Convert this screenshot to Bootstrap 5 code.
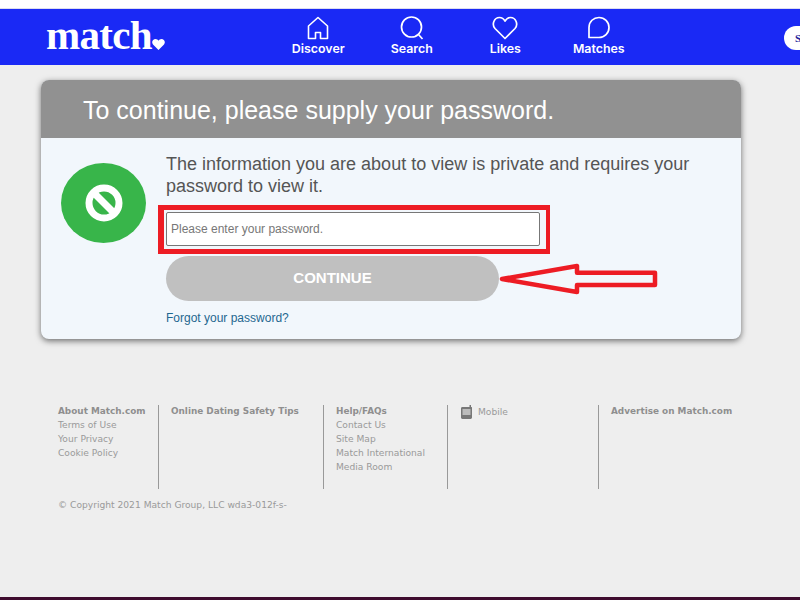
<!DOCTYPE html>
<html lang="en">
<head>
  <meta charset="UTF-8" />
  <meta name="viewport" content="width=device-width, initial-scale=1.0" />
  <title>Match - Password</title>
  <link href="https://cdn.jsdelivr.net/npm/bootstrap@5.3.3/dist/css/bootstrap.min.css" rel="stylesheet" />
  <style>
    html, body { height: 600px; overflow: hidden; }
    body { font-family: "Liberation Sans", Arial, sans-serif; padding-top: 9px; position: relative; background: #eee linear-gradient(#fff 8px, #dcdcf0 8px, #dcdcf0 9px, #eee 9px); }
    .top-bar { background: #1a29f5; height: 56px; overflow: hidden; position: relative; }
    .brand-logo { margin-left: 46px; width: 210px; color: #fff; font: 700 41px/1 "Liberation Serif", serif; letter-spacing: -.7px; padding-top: 6px; white-space: nowrap; }
    .brand-logo svg { vertical-align: -1px; }
    .top-links { margin-left: 15.500px; }
    .top-link { width: 93.5px; color: #fff; font: 600 12.4px/14px Inter, sans-serif; text-align: center; text-decoration: none; padding-top: 7px; display: block; }
    .top-link svg { display: block; margin: 0 auto 2px; }
    .user-pill { position: absolute; left: 784px; top: 17px; width: 40px; height: 24px; background: #fff; border-radius: 12px; color: #23239a; font: 700 11px/24px "Liberation Serif", serif; padding-left: 11px; }
    .pw-panel { width: 700px; height: 259px; margin: 15px 0 0 41px; border-radius: 8px; overflow: hidden; background: #f2f7fc; box-shadow: 0 2px 6px rgba(0,0,0,.55); }
    .pw-head { background: #919191; height: 58px; color: #fff; font-size: 25px; line-height: 60px; padding-left: 42px; }
    .pw-body { padding: 15px 0 0 20px; }
    .pw-icon { width: 85px; height: 80px; margin-top: 10px; border-radius: 50%; background: #38b54a; flex: none; }
    .pw-form { margin-left: 20px; width: 540px; }
    .pw-text { color: #555; font-size: 18px; line-height: 22px; margin: 0 0 15px; }
    .pw-input { width: 374px; height: 34px; border: 1px solid #777; border-radius: 2px; background: #fff; font-size: 12px; color: #666; padding: 0 4px; display: block; }
    .pw-input::placeholder { color: #777; opacity: 1; }
    .pw-btn { width: 333px; height: 45px; margin-top: 10px; display: block; border: 0; border-radius: 23px; background: #c0c0c0; color: #fff; font-size: 15px; font-weight: 700; padding: 0; }
    .forgot { display: inline-block; margin-top: 10px; color: #1f6790; font-size: 12px; line-height: 14px; text-decoration: none; }
    .red-box { position: absolute; left: 158px; top: 205px; width: 392px; height: 49px; border-style: solid; border-color: #ed1c24; border-width: 5px 4px 5px 6px; }
    .red-arrow { position: absolute; left: 495px; top: 260px; }
    .foot-wrap { margin: 66px 0 0 58px; font: 9.15px/14px "DejaVu Sans", Verdana, sans-serif; }
    .foot-col { height: 84px; border-right: 1px solid #999; flex: none; margin-bottom: 9px; }
    .foot-col:last-child { border-right: 0; }
    .foot-col a { display: block; color: #9a9a9a; text-decoration: none; white-space: nowrap; position: relative; top: -1px; }
    .foot-col a.foot-title { color: #8f8f8f; font-weight: 700; font-size: 8.9px; }
    .fc-1 { width: 101px; }
    .fc-2 { width: 165px; padding-left: 12px; }
    .fc-3 { width: 124px; padding-left: 12px; }
    .fc-4 { width: 151px; padding-left: 13px; }
    .fc-5 { width: 180px; padding-left: 12px; }
    .mobile-link { gap: 6px; padding-top: 1px; }
    .foot-copy { color: #9a9a9a; }
    .bottom-strip { position: absolute; left: 0; right: 0; top: 597px; height: 3px; background: #3f0c2e; }
  </style>
</head>
<body>

  <!-- Header -->
  <div class="top-bar d-flex">
    <div class="brand-logo">match<svg width="13" height="11" viewBox="0 0 13 11"><path d="M6.500 11 1 5.500C-1 3 1 0 3.500 0c1.300 0 2.400.8 3 1.800C7.100.8 8.200 0 9.500 0 12 0 14 3 12 5.500z" fill="#fff"/></svg></div>
    <div class="top-links d-flex">
      <a class="top-link" href="#">
        <svg width="22" height="24" viewBox="0 0 22 24" fill="none" stroke="#fff" stroke-width="1.600"><path d="M1.500 22.500V10L11 1.500 20.500 10v12.500h-7v-6h-5v6z" stroke-linejoin="round"/></svg>
        Discover</a>
      <a class="top-link" href="#">
        <svg width="26" height="24" viewBox="0 0 26 24" fill="none" stroke="#fff" stroke-width="1.700"><circle cx="12.500" cy="11" r="10"/><path d="m19.500 18.500 4 4.500"/></svg>
        Search</a>
      <a class="top-link" href="#">
        <svg width="26" height="24" viewBox="0 0 26 24" fill="none" stroke="#fff" stroke-width="1.700"><path d="M13 22.500 3 12.500C-.5 8.500 2 1.500 7.500 1.500c2.500 0 4.300 1.500 5.500 3.700 1.200-2.200 3-3.700 5.500-3.700 5.500 0 8 7 4.500 11z" stroke-linejoin="round"/></svg>
        Likes</a>
      <a class="top-link" href="#">
        <svg width="24" height="24" viewBox="0 0 24 24" fill="none" stroke="#fff" stroke-width="1.700"><path d="M2 21.500V11.500C2 5.500 6.500 1.500 12 1.500s10 4.300 10 10-4.500 10-10 10z" stroke-linejoin="round"/></svg>
        Matches</a>
    </div>
    <div class="user-pill">S</div>
  </div>

  <!-- Password panel -->
  <div class="pw-panel">
    <div class="pw-head">To continue, please supply your password.</div>
    <div class="pw-body d-flex">
      <div class="pw-icon d-flex align-items-center justify-content-center">
        <svg width="38" height="38" viewBox="0 0 38 38" fill="none" stroke="#fff" stroke-width="7"><ellipse cx="19" cy="19" rx="15" ry="15"/><path d="m9 9 20 20"/></svg>
      </div>
      <form class="pw-form">
        <p class="pw-text">The information you are about to view is private and requires your password to view it.</p>
        <input class="pw-input" type="text" placeholder="Please enter your password." />
        <button class="pw-btn" type="button">CONTINUE</button>
        <a class="forgot" href="#">Forgot your password?</a>
      </form>
    </div>
  </div>

  <!-- Annotations drawn over the form -->
  <div class="red-box"></div>
  <svg class="red-arrow" width="165" height="40" viewBox="0 0 165 40" fill="none" stroke="#ed1c24" stroke-width="4.500" stroke-linejoin="round"><path d="M7 19 82 6v6.700h78V25H82v7z"/></svg>

  <!-- Footer -->
  <div class="foot-wrap">
    <div class="d-flex">
      <div class="foot-col fc-1">
        <a class="foot-title" href="#">About Match.com</a>
        <a href="#">Terms of Use</a>
        <a href="#">Your Privacy</a>
        <a href="#">Cookie Policy</a>
      </div>
      <div class="foot-col fc-2"><a class="foot-title" href="#">Online Dating Safety Tips</a></div>
      <div class="foot-col fc-3">
        <a class="foot-title" href="#">Help/FAQs</a>
        <a href="#">Contact Us</a>
        <a href="#">Site Map</a>
        <a href="#">Match International</a>
        <a href="#">Media Room</a>
      </div>
      <div class="foot-col fc-4">
        <a class="mobile-link d-flex align-items-center" href="#">
          <svg width="11" height="14" viewBox="0 0 11 14"><path d="M8.500 0h1.500v2h.5c.3 0 .5.300.5.600v10c0 .8-.6 1.400-1.400 1.400H1.400C.6 14 0 13.400 0 12.600V3.400C0 2.600.6 2 1.400 2h7.100z" fill="#777"/><rect x="1.500" y="4" width="8" height="6" fill="#bbb"/></svg>
          Mobile</a>
      </div>
      <div class="foot-col fc-5"><a class="foot-title" href="#">Advertise on Match.com</a></div>
    </div>
    <div class="foot-copy">© Copyright 2021 Match Group, LLC wda3-012f-s-</div>
  </div>

  <div class="bottom-strip"></div>

  <script src="https://cdn.jsdelivr.net/npm/bootstrap@5.3.3/dist/js/bootstrap.bundle.min.js"></script>
</body>
</html>
